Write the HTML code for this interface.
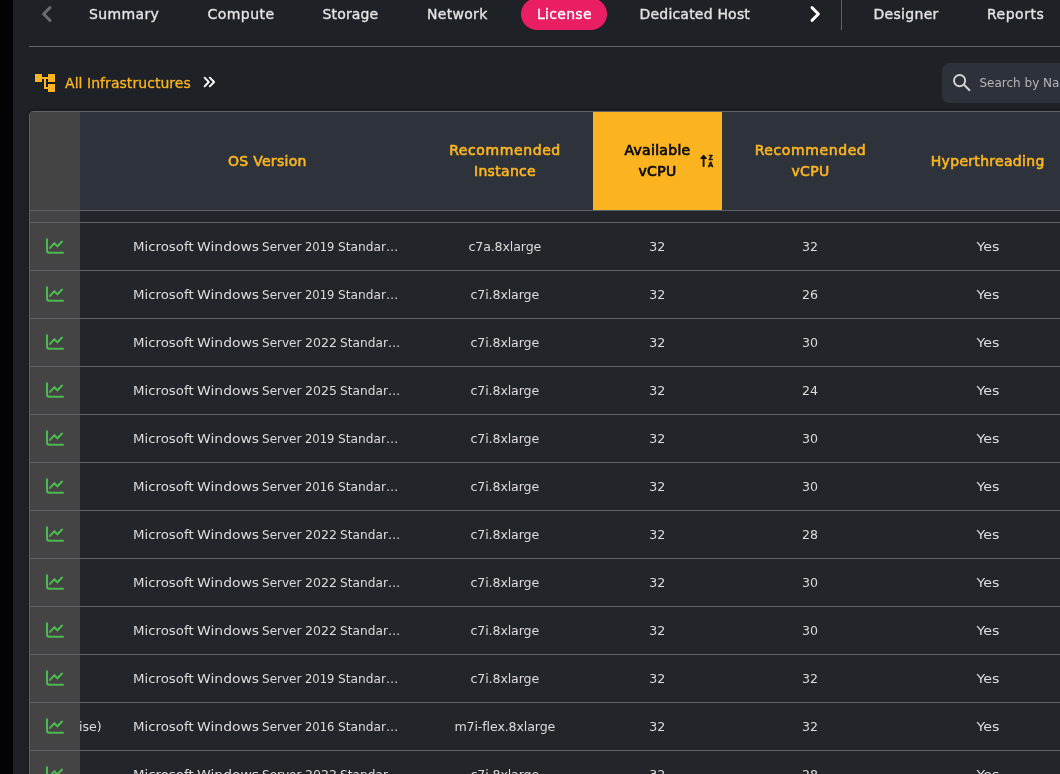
<!DOCTYPE html>
<html><head><meta charset="utf-8">
<style>
html,body{margin:0;padding:0;}
body{width:1060px;height:774px;overflow:hidden;background:#1e2126;position:relative;font-family:"Liberation Sans",sans-serif;color:#e6e6e6;}
.nav,.crumb,.search,.table{will-change:transform;}
.strip{position:absolute;left:0;top:0;width:13px;height:774px;background:#030303;}
.nav{position:absolute;left:0;top:0;height:46px;width:1060px;}
.nav span{position:absolute;top:6px;-webkit-text-stroke:0.35px currentColor;font-family:"DejaVu Sans","Liberation Sans",sans-serif;font-size:14px;line-height:17px;color:#e4e4e4;white-space:nowrap;letter-spacing:0.3px;}
.hr{position:absolute;left:29px;top:46px;width:1031px;height:1px;background:#606367;}
.pill{position:absolute;left:521px;top:-2px;width:86px;height:32px;border-radius:16px;background:#e91e63;}
.vdiv{position:absolute;left:841px;top:0;width:1px;height:30px;background:#606367;}
.crumb{position:absolute;left:65px;top:75px;-webkit-text-stroke:0.3px currentColor;font-family:"DejaVu Sans","Liberation Sans",sans-serif;font-size:14px;line-height:17px;color:#fbb522;letter-spacing:0.05px;white-space:nowrap;}
.search{position:absolute;left:942px;top:63px;width:140px;height:40px;border-radius:7px;background:#2d3139;}
.search span{position:absolute;left:37.5px;top:11.5px;font-family:"DejaVu Sans","Liberation Sans",sans-serif;font-size:12px;line-height:16px;color:#b4b6b9;white-space:nowrap;}
.table{position:absolute;left:29px;top:111px;width:1040px;height:680px;border:1px solid #5f6367;border-radius:4px 0 0 0;overflow:hidden;background:#22252a;box-shadow:0 -1px 5px rgba(0,0,0,0.28);}
.thead{position:absolute;left:0;top:0;width:1040px;height:98px;background:#2e323a;border-bottom:1px solid #5f6367;}
.icol{position:absolute;left:0;top:0;width:50px;height:700px;background:#444444;}
.th{position:absolute;top:0;height:98px;display:flex;align-items:center;justify-content:center;text-align:center;font-family:"DejaVu Sans","Liberation Sans",sans-serif;font-size:14px;line-height:21px;color:#fbb522;-webkit-text-stroke:0.6px currentColor;letter-spacing:0.3px;white-space:nowrap;}
.row{position:absolute;left:0;width:1040px;height:47px;border-top:1px solid #5f6367;}
.row span{position:absolute;top:0;line-height:47px;font-family:"DejaVu Sans","Liberation Sans",sans-serif;font-size:12.6px;color:#dcdcdc;white-space:nowrap;letter-spacing:0;}
.row .cc{transform:translateX(-50%);}
.row .w{transform-origin:0 50%;}
.row .c1{left:102.7px;}
.row .c0{left:49px;}
.ic{position:absolute;left:15px;width:20px;height:18px;}
.ic svg{display:block;}
.hline{position:absolute;left:0;width:1040px;height:1px;background:#5f6367;}
</style></head><body>
<div class="strip"></div>
<div class="nav">
<svg style="position:absolute;left:36px;top:0px" width="24" height="28" viewBox="36 0 24 28"><path d="M50 7.6 L43.6 14 L50 20.4" fill="none" stroke="#696c71" stroke-width="2.9" stroke-linecap="round" stroke-linejoin="round"/></svg>
<span style="left:89px;letter-spacing:0.36px">Summary</span>
<span style="left:207.5px;letter-spacing:0.45px">Compute</span>
<span style="left:322.5px;letter-spacing:0.15px">Storage</span>
<span style="left:427px">Network</span>
<div class="pill"></div>
<span style="left:537px;color:#fff">License</span>
<span style="left:639.5px;letter-spacing:0.2px">Dedicated Host</span>
<svg style="position:absolute;left:802px;top:0px" width="24" height="28" viewBox="802 0 24 28"><path d="M812 7.6 L818.4 14 L812 20.4" fill="none" stroke="#ffffff" stroke-width="2.9" stroke-linecap="round" stroke-linejoin="round"/></svg>
<div class="vdiv"></div>
<span style="left:873.5px">Designer</span>
<span style="left:987px;letter-spacing:0.5px">Reports</span>
</div>
<div class="hr"></div>
<svg style="position:absolute;left:33px;top:72px" width="24" height="22" viewBox="33 72 24 22"><g fill="#fbb522" stroke="#0d1422" stroke-width="0.8" paint-order="stroke"><path d="M35 74h7v3h6v-3h7v8h-7v-3h-2v8h2v-3h7v8h-7v-3h-4v-10h-2v3h-7z"/></g></svg>
<div class="crumb">All Infrastructures</div>
<svg style="position:absolute;left:198px;top:70px" width="24" height="24" viewBox="198 70 24 24"><path d="M204.6 77.7 L208.8 82 L204.6 86.3 M209.8 77.7 L214.1 82 L209.8 86.3" fill="none" stroke="#fff" stroke-width="1.9" stroke-linecap="round" stroke-linejoin="round"/></svg>
<div class="search"><svg style="position:absolute;left:9px;top:10px" width="22" height="22" viewBox="0 0 22 22"><circle cx="8.6" cy="7.6" r="5.6" fill="none" stroke="#d4d4d4" stroke-width="1.9"/><path d="M13 11.8 L19 17.8" stroke="#d4d4d4" stroke-width="2" fill="none"/></svg><span>Search by Name</span></div>
<div class="table">
<div class="thead">
<div class="th" style="left:83.3px;width:308px">OS Version</div>
<div class="th" style="left:391px;width:168px"><div><span style="letter-spacing:0.6px">Recommended</span><br>Instance</div></div>
<div class="th" style="left:563px;width:129px;background:#fbb41f;color:#0a0a0a;-webkit-text-stroke:0.7px #0a0a0a;"><div>Available<br>vCPU</div>
<svg style="position:absolute;left:106px;top:41px" width="18" height="16" viewBox="0 0 18 16"><path d="M4.6 13.0 V3.5" fill="none" stroke="#111" stroke-width="1.9" stroke-linecap="round"/><path d="M4.6 2.5 L2.1 5.4 L7.1 5.4 Z" fill="#111" stroke="#111" stroke-width="1.4" stroke-linejoin="round"/><text x="11.65" y="7.0" font-family="Liberation Sans, sans-serif" font-weight="bold" font-size="6.4" text-anchor="middle" fill="#111" stroke="#111" stroke-width="0.6" letter-spacing="0">Z</text><text x="11.85" y="14.0" font-family="Liberation Sans, sans-serif" font-weight="bold" font-size="7.3" text-anchor="middle" fill="#111" stroke="#111" stroke-width="0.55">A</text></svg></div>
<div class="th" style="left:691.5px;width:178px"><div><span style="letter-spacing:0.6px">Recommended</span><br>vCPU</div></div>
<div class="th" style="left:869.2px;width:177px">Hyperthreading</div>
</div>
<div class="row" style="top:110px">
<span class="c1"><span class="w" style="left:0;transform:scaleX(1.058)">Microsoft </span><span class="w" style="left:64.1px;transform:scaleX(1.105)">Windows </span><span class="w" style="left:129.2px;transform:scaleX(0.955)">Server </span><span class="w" style="left:172.1px;transform:scaleX(0.915)">2019 </span><span class="w" style="left:205.1px;transform:scaleX(0.968)">Standar…</span></span><span class="cc" style="left:474.8px;letter-spacing:-0.12px">c7a.8xlarge</span><span class="cc" style="left:627.3px">32</span><span class="cc" style="left:779.9px">32</span><span class="cc" style="left:957.7px;transform:translateX(-50%) scaleX(1.13)">Yes</span>
</div>
<div class="row" style="top:158px">
<span class="c1"><span class="w" style="left:0;transform:scaleX(1.058)">Microsoft </span><span class="w" style="left:64.1px;transform:scaleX(1.105)">Windows </span><span class="w" style="left:129.2px;transform:scaleX(0.955)">Server </span><span class="w" style="left:172.1px;transform:scaleX(0.915)">2019 </span><span class="w" style="left:205.1px;transform:scaleX(0.968)">Standar…</span></span><span class="cc" style="left:474.8px;letter-spacing:-0.12px">c7i.8xlarge</span><span class="cc" style="left:627.3px">32</span><span class="cc" style="left:779.9px">26</span><span class="cc" style="left:957.7px;transform:translateX(-50%) scaleX(1.13)">Yes</span>
</div>
<div class="row" style="top:206px">
<span class="c1"><span class="w" style="left:0;transform:scaleX(1.058)">Microsoft </span><span class="w" style="left:64.1px;transform:scaleX(1.105)">Windows </span><span class="w" style="left:129.2px;transform:scaleX(0.955)">Server </span><span class="w" style="left:172.1px;transform:scaleX(0.995)">2022 </span><span class="w" style="left:207.5px;transform:scaleX(0.968)">Standar…</span></span><span class="cc" style="left:474.8px;letter-spacing:-0.12px">c7i.8xlarge</span><span class="cc" style="left:627.3px">32</span><span class="cc" style="left:779.9px">30</span><span class="cc" style="left:957.7px;transform:translateX(-50%) scaleX(1.13)">Yes</span>
</div>
<div class="row" style="top:254px">
<span class="c1"><span class="w" style="left:0;transform:scaleX(1.058)">Microsoft </span><span class="w" style="left:64.1px;transform:scaleX(1.105)">Windows </span><span class="w" style="left:129.2px;transform:scaleX(0.955)">Server </span><span class="w" style="left:172.1px;transform:scaleX(0.995)">2025 </span><span class="w" style="left:207.5px;transform:scaleX(0.968)">Standar…</span></span><span class="cc" style="left:474.8px;letter-spacing:-0.12px">c7i.8xlarge</span><span class="cc" style="left:627.3px">32</span><span class="cc" style="left:779.9px">24</span><span class="cc" style="left:957.7px;transform:translateX(-50%) scaleX(1.13)">Yes</span>
</div>
<div class="row" style="top:302px">
<span class="c1"><span class="w" style="left:0;transform:scaleX(1.058)">Microsoft </span><span class="w" style="left:64.1px;transform:scaleX(1.105)">Windows </span><span class="w" style="left:129.2px;transform:scaleX(0.955)">Server </span><span class="w" style="left:172.1px;transform:scaleX(0.915)">2019 </span><span class="w" style="left:205.1px;transform:scaleX(0.968)">Standar…</span></span><span class="cc" style="left:474.8px;letter-spacing:-0.12px">c7i.8xlarge</span><span class="cc" style="left:627.3px">32</span><span class="cc" style="left:779.9px">30</span><span class="cc" style="left:957.7px;transform:translateX(-50%) scaleX(1.13)">Yes</span>
</div>
<div class="row" style="top:350px">
<span class="c1"><span class="w" style="left:0;transform:scaleX(1.058)">Microsoft </span><span class="w" style="left:64.1px;transform:scaleX(1.105)">Windows </span><span class="w" style="left:129.2px;transform:scaleX(0.955)">Server </span><span class="w" style="left:172.1px;transform:scaleX(0.915)">2016 </span><span class="w" style="left:205.1px;transform:scaleX(0.968)">Standar…</span></span><span class="cc" style="left:474.8px;letter-spacing:-0.12px">c7i.8xlarge</span><span class="cc" style="left:627.3px">32</span><span class="cc" style="left:779.9px">30</span><span class="cc" style="left:957.7px;transform:translateX(-50%) scaleX(1.13)">Yes</span>
</div>
<div class="row" style="top:398px">
<span class="c1"><span class="w" style="left:0;transform:scaleX(1.058)">Microsoft </span><span class="w" style="left:64.1px;transform:scaleX(1.105)">Windows </span><span class="w" style="left:129.2px;transform:scaleX(0.955)">Server </span><span class="w" style="left:172.1px;transform:scaleX(0.995)">2022 </span><span class="w" style="left:207.5px;transform:scaleX(0.968)">Standar…</span></span><span class="cc" style="left:474.8px;letter-spacing:-0.12px">c7i.8xlarge</span><span class="cc" style="left:627.3px">32</span><span class="cc" style="left:779.9px">28</span><span class="cc" style="left:957.7px;transform:translateX(-50%) scaleX(1.13)">Yes</span>
</div>
<div class="row" style="top:446px">
<span class="c1"><span class="w" style="left:0;transform:scaleX(1.058)">Microsoft </span><span class="w" style="left:64.1px;transform:scaleX(1.105)">Windows </span><span class="w" style="left:129.2px;transform:scaleX(0.955)">Server </span><span class="w" style="left:172.1px;transform:scaleX(0.995)">2022 </span><span class="w" style="left:207.5px;transform:scaleX(0.968)">Standar…</span></span><span class="cc" style="left:474.8px;letter-spacing:-0.12px">c7i.8xlarge</span><span class="cc" style="left:627.3px">32</span><span class="cc" style="left:779.9px">30</span><span class="cc" style="left:957.7px;transform:translateX(-50%) scaleX(1.13)">Yes</span>
</div>
<div class="row" style="top:494px">
<span class="c1"><span class="w" style="left:0;transform:scaleX(1.058)">Microsoft </span><span class="w" style="left:64.1px;transform:scaleX(1.105)">Windows </span><span class="w" style="left:129.2px;transform:scaleX(0.955)">Server </span><span class="w" style="left:172.1px;transform:scaleX(0.995)">2022 </span><span class="w" style="left:207.5px;transform:scaleX(0.968)">Standar…</span></span><span class="cc" style="left:474.8px;letter-spacing:-0.12px">c7i.8xlarge</span><span class="cc" style="left:627.3px">32</span><span class="cc" style="left:779.9px">30</span><span class="cc" style="left:957.7px;transform:translateX(-50%) scaleX(1.13)">Yes</span>
</div>
<div class="row" style="top:542px">
<span class="c1"><span class="w" style="left:0;transform:scaleX(1.058)">Microsoft </span><span class="w" style="left:64.1px;transform:scaleX(1.105)">Windows </span><span class="w" style="left:129.2px;transform:scaleX(0.955)">Server </span><span class="w" style="left:172.1px;transform:scaleX(0.915)">2019 </span><span class="w" style="left:205.1px;transform:scaleX(0.968)">Standar…</span></span><span class="cc" style="left:474.8px;letter-spacing:-0.12px">c7i.8xlarge</span><span class="cc" style="left:627.3px">32</span><span class="cc" style="left:779.9px">32</span><span class="cc" style="left:957.7px;transform:translateX(-50%) scaleX(1.13)">Yes</span>
</div>
<div class="row" style="top:590px">
<span class="c0">ise)</span>
<span class="c1"><span class="w" style="left:0;transform:scaleX(1.058)">Microsoft </span><span class="w" style="left:64.1px;transform:scaleX(1.105)">Windows </span><span class="w" style="left:129.2px;transform:scaleX(0.955)">Server </span><span class="w" style="left:172.1px;transform:scaleX(0.915)">2016 </span><span class="w" style="left:205.1px;transform:scaleX(0.968)">Standar…</span></span><span class="cc" style="left:474.8px;letter-spacing:-0.12px">m7i-flex.8xlarge</span><span class="cc" style="left:627.3px">32</span><span class="cc" style="left:779.9px">32</span><span class="cc" style="left:957.7px;transform:translateX(-50%) scaleX(1.13)">Yes</span>
</div>
<div class="row" style="top:638px">
<span class="c1"><span class="w" style="left:0;transform:scaleX(1.058)">Microsoft </span><span class="w" style="left:64.1px;transform:scaleX(1.105)">Windows </span><span class="w" style="left:129.2px;transform:scaleX(0.955)">Server </span><span class="w" style="left:172.1px;transform:scaleX(0.995)">2022 </span><span class="w" style="left:207.5px;transform:scaleX(0.968)">Standar…</span></span><span class="cc" style="left:474.8px;letter-spacing:-0.12px">c7i.8xlarge</span><span class="cc" style="left:627.3px">32</span><span class="cc" style="left:779.9px">28</span><span class="cc" style="left:957.7px;transform:translateX(-50%) scaleX(1.13)">Yes</span>
</div>
<div class="icol"></div>
<div class="hline" style="top:98px"></div>
<div class="hline" style="top:110px;width:50px"></div><div class="ic" style="top:126px"><svg class="ci" width="20" height="18" viewBox="0 0 20 18"><path d="M2 1.3 V12.4 Q2 14.8 4.4 14.8 H18" fill="none" stroke="#4cb850" stroke-width="2.1" stroke-linecap="round"/><path d="M5.0 9.9 L9.4 5.1 L12.3 8.4 L17.0 3.5" fill="none" stroke="#4cb850" stroke-width="2.1" stroke-linecap="round" stroke-linejoin="round"/></svg></div>
<div class="hline" style="top:158px;width:50px"></div><div class="ic" style="top:174px"><svg class="ci" width="20" height="18" viewBox="0 0 20 18"><path d="M2 1.3 V12.4 Q2 14.8 4.4 14.8 H18" fill="none" stroke="#4cb850" stroke-width="2.1" stroke-linecap="round"/><path d="M5.0 9.9 L9.4 5.1 L12.3 8.4 L17.0 3.5" fill="none" stroke="#4cb850" stroke-width="2.1" stroke-linecap="round" stroke-linejoin="round"/></svg></div>
<div class="hline" style="top:206px;width:50px"></div><div class="ic" style="top:222px"><svg class="ci" width="20" height="18" viewBox="0 0 20 18"><path d="M2 1.3 V12.4 Q2 14.8 4.4 14.8 H18" fill="none" stroke="#4cb850" stroke-width="2.1" stroke-linecap="round"/><path d="M5.0 9.9 L9.4 5.1 L12.3 8.4 L17.0 3.5" fill="none" stroke="#4cb850" stroke-width="2.1" stroke-linecap="round" stroke-linejoin="round"/></svg></div>
<div class="hline" style="top:254px;width:50px"></div><div class="ic" style="top:270px"><svg class="ci" width="20" height="18" viewBox="0 0 20 18"><path d="M2 1.3 V12.4 Q2 14.8 4.4 14.8 H18" fill="none" stroke="#4cb850" stroke-width="2.1" stroke-linecap="round"/><path d="M5.0 9.9 L9.4 5.1 L12.3 8.4 L17.0 3.5" fill="none" stroke="#4cb850" stroke-width="2.1" stroke-linecap="round" stroke-linejoin="round"/></svg></div>
<div class="hline" style="top:302px;width:50px"></div><div class="ic" style="top:318px"><svg class="ci" width="20" height="18" viewBox="0 0 20 18"><path d="M2 1.3 V12.4 Q2 14.8 4.4 14.8 H18" fill="none" stroke="#4cb850" stroke-width="2.1" stroke-linecap="round"/><path d="M5.0 9.9 L9.4 5.1 L12.3 8.4 L17.0 3.5" fill="none" stroke="#4cb850" stroke-width="2.1" stroke-linecap="round" stroke-linejoin="round"/></svg></div>
<div class="hline" style="top:350px;width:50px"></div><div class="ic" style="top:366px"><svg class="ci" width="20" height="18" viewBox="0 0 20 18"><path d="M2 1.3 V12.4 Q2 14.8 4.4 14.8 H18" fill="none" stroke="#4cb850" stroke-width="2.1" stroke-linecap="round"/><path d="M5.0 9.9 L9.4 5.1 L12.3 8.4 L17.0 3.5" fill="none" stroke="#4cb850" stroke-width="2.1" stroke-linecap="round" stroke-linejoin="round"/></svg></div>
<div class="hline" style="top:398px;width:50px"></div><div class="ic" style="top:414px"><svg class="ci" width="20" height="18" viewBox="0 0 20 18"><path d="M2 1.3 V12.4 Q2 14.8 4.4 14.8 H18" fill="none" stroke="#4cb850" stroke-width="2.1" stroke-linecap="round"/><path d="M5.0 9.9 L9.4 5.1 L12.3 8.4 L17.0 3.5" fill="none" stroke="#4cb850" stroke-width="2.1" stroke-linecap="round" stroke-linejoin="round"/></svg></div>
<div class="hline" style="top:446px;width:50px"></div><div class="ic" style="top:462px"><svg class="ci" width="20" height="18" viewBox="0 0 20 18"><path d="M2 1.3 V12.4 Q2 14.8 4.4 14.8 H18" fill="none" stroke="#4cb850" stroke-width="2.1" stroke-linecap="round"/><path d="M5.0 9.9 L9.4 5.1 L12.3 8.4 L17.0 3.5" fill="none" stroke="#4cb850" stroke-width="2.1" stroke-linecap="round" stroke-linejoin="round"/></svg></div>
<div class="hline" style="top:494px;width:50px"></div><div class="ic" style="top:510px"><svg class="ci" width="20" height="18" viewBox="0 0 20 18"><path d="M2 1.3 V12.4 Q2 14.8 4.4 14.8 H18" fill="none" stroke="#4cb850" stroke-width="2.1" stroke-linecap="round"/><path d="M5.0 9.9 L9.4 5.1 L12.3 8.4 L17.0 3.5" fill="none" stroke="#4cb850" stroke-width="2.1" stroke-linecap="round" stroke-linejoin="round"/></svg></div>
<div class="hline" style="top:542px;width:50px"></div><div class="ic" style="top:558px"><svg class="ci" width="20" height="18" viewBox="0 0 20 18"><path d="M2 1.3 V12.4 Q2 14.8 4.4 14.8 H18" fill="none" stroke="#4cb850" stroke-width="2.1" stroke-linecap="round"/><path d="M5.0 9.9 L9.4 5.1 L12.3 8.4 L17.0 3.5" fill="none" stroke="#4cb850" stroke-width="2.1" stroke-linecap="round" stroke-linejoin="round"/></svg></div>
<div class="hline" style="top:590px;width:50px"></div><div class="ic" style="top:606px"><svg class="ci" width="20" height="18" viewBox="0 0 20 18"><path d="M2 1.3 V12.4 Q2 14.8 4.4 14.8 H18" fill="none" stroke="#4cb850" stroke-width="2.1" stroke-linecap="round"/><path d="M5.0 9.9 L9.4 5.1 L12.3 8.4 L17.0 3.5" fill="none" stroke="#4cb850" stroke-width="2.1" stroke-linecap="round" stroke-linejoin="round"/></svg></div>
<div class="hline" style="top:638px;width:50px"></div><div class="ic" style="top:654px"><svg class="ci" width="20" height="18" viewBox="0 0 20 18"><path d="M2 1.3 V12.4 Q2 14.8 4.4 14.8 H18" fill="none" stroke="#4cb850" stroke-width="2.1" stroke-linecap="round"/><path d="M5.0 9.9 L9.4 5.1 L12.3 8.4 L17.0 3.5" fill="none" stroke="#4cb850" stroke-width="2.1" stroke-linecap="round" stroke-linejoin="round"/></svg></div>
</div>
</body></html>
